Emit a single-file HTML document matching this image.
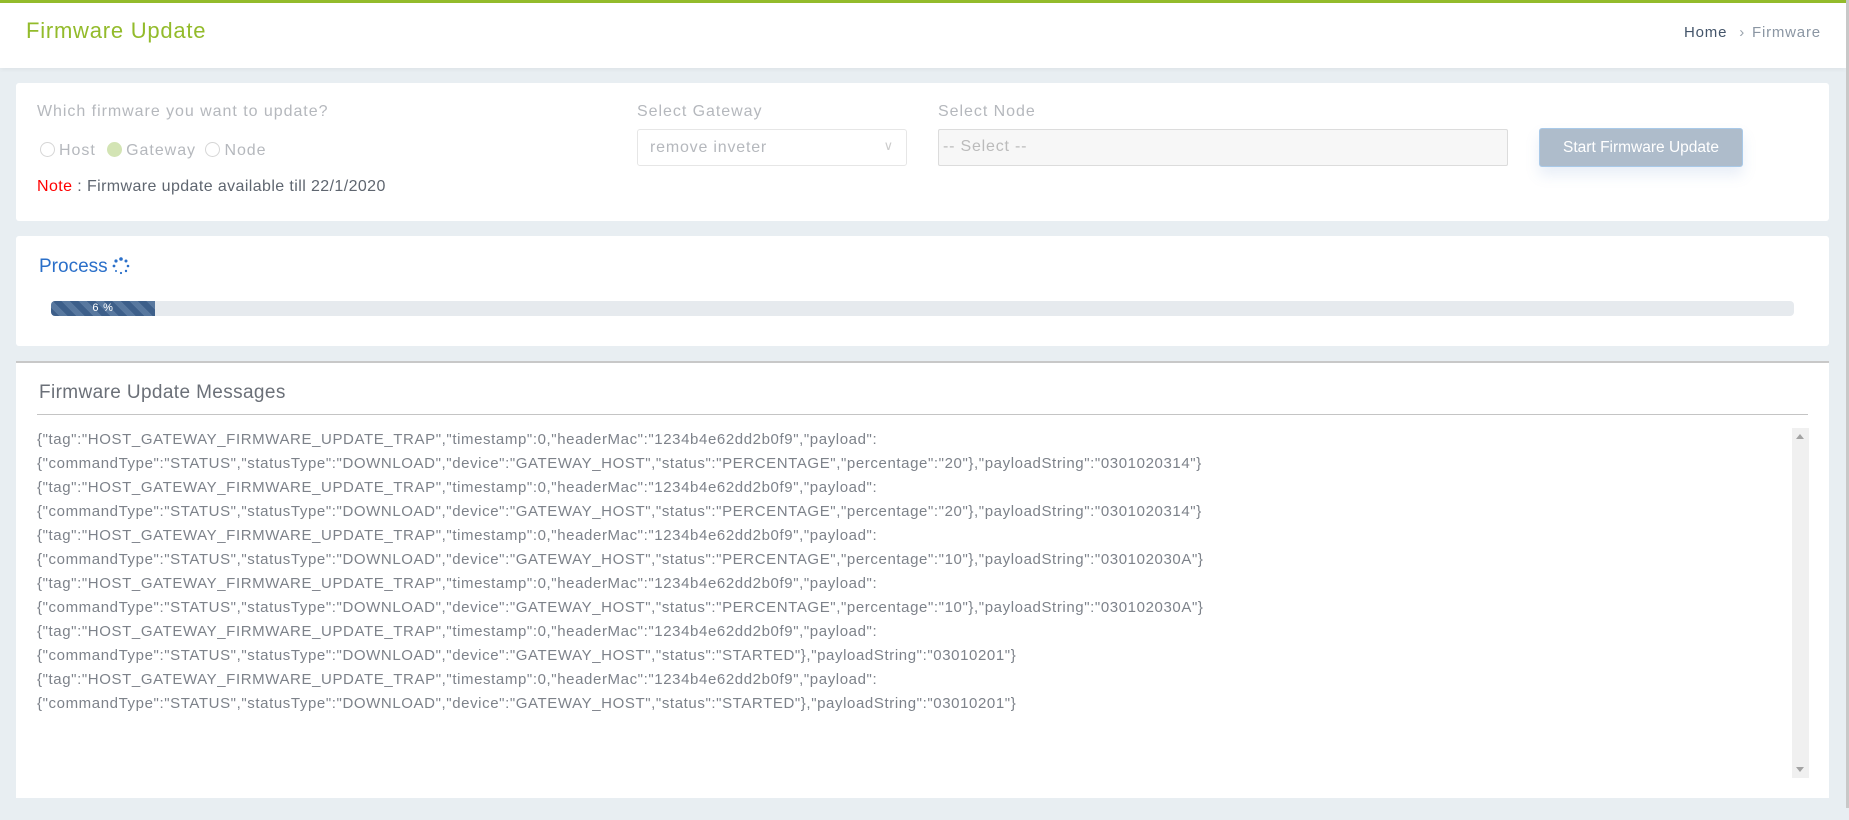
<!DOCTYPE html>
<html><head><meta charset="utf-8"><style>
*{box-sizing:border-box;margin:0;padding:0}
body{width:1849px;height:820px;background:#e8eef2;font-family:"Liberation Sans",sans-serif;position:relative;overflow:hidden;letter-spacing:0.05em}
.abs{position:absolute}
.top{left:0;top:0;width:1846px;height:68px;background:#fff;border-top:3px solid #93bb2b;box-shadow:0 2px 4px rgba(0,0,0,.04)}
.card{background:#fff;border-radius:3px;position:absolute}
.lbl{color:#b5b8bd;font-size:16px;letter-spacing:0.06em}
.radio{display:inline-block;width:15px;height:15px;border-radius:50%;border:1px solid #d6d6d6;vertical-align:-2px;margin-right:4px}
.msg{font-size:15px;color:#7d828a;line-height:24px;white-space:nowrap;letter-spacing:0.6px}
</style></head><body>
<div class="abs top"></div>
<div class="abs" style="left:26px;top:18px;font-size:22px;color:#93bb2b;letter-spacing:0.035em">Firmware Update</div>
<div class="abs" style="left:1684px;top:24px;font-size:15px;color:#44556a">Home <span style="color:#9aa3ad;margin:0 7px">&#8250;</span><span style="color:#8b96a3">Firmware</span></div>
<div class="abs" style="left:1846px;top:0;width:3px;height:808px;background:#c8c8c8"></div>

<div class="card" style="left:16px;top:83px;width:1813px;height:138px"></div>
<div class="abs lbl" style="left:37px;top:103px">Which firmware you want to update?</div>
<div class="abs lbl" style="left:40px;top:142px;font-size:16px"><span class="radio"></span>Host <span class="radio" style="background:#d3e4b4;border-color:#d3e4b4;margin-left:6px"></span>Gateway <span class="radio" style="margin-left:4px"></span>Node</div>
<div class="abs" style="left:37px;top:178px;font-size:16px;color:#5f6670;letter-spacing:0.025em"><span style="color:#f00">Note</span> : Firmware update available till 22/1/2020</div>
<div class="abs lbl" style="left:637px;top:103px">Select Gateway</div>
<div class="abs" style="left:637px;top:129px;width:270px;height:37px;border:1px solid #e6e6e6;border-radius:3px;font-size:16px;color:#b5b8bd;padding:9px 12px">remove inveter<span style="position:absolute;right:12px;top:8px;color:#ccc;font-size:13px">&#8744;</span></div>
<div class="abs lbl" style="left:938px;top:103px">Select Node</div>
<div class="abs" style="left:938px;top:129px;width:570px;height:37px;border:1px solid #dcdcdc;border-radius:2px;background:#f7f7f7;font-size:16px;color:#bbb;padding:8px 4px">-- Select --</div>
<div class="abs" style="left:1539px;top:128px;width:204px;height:39px;background:#aebccb;border:1px solid #a9c9e8;border-radius:3px;color:#fff;font-size:15.5px;text-align:center;line-height:37px;letter-spacing:0;box-shadow:0 8px 14px rgba(100,140,200,.15)">Start Firmware Update</div>

<div class="card" style="left:16px;top:236px;width:1813px;height:110px"></div>
<div class="abs" style="left:39px;top:256px;font-size:19px;color:#2a6fc9;letter-spacing:0">Process</div>
<svg class="abs" style="left:112px;top:257px" width="18" height="18" viewBox="0 0 18 18"><g fill="#2a6fc9"><circle cx="9" cy="2" r="1.8"/><circle cx="14" cy="4" r="1.5"/><circle cx="16" cy="9" r="1.3"/><circle cx="14" cy="14" r="1.2"/><circle cx="9" cy="16" r="1.1"/><circle cx="4" cy="14" r="1"/><circle cx="2" cy="9" r="1.4"/><circle cx="4" cy="4" r="1.6"/></g></svg>
<div class="abs" style="left:51px;top:301px;width:1743px;height:15px;background:#e6eaee;border-radius:4px"></div>
<div class="abs" style="left:51px;top:301px;width:104px;height:15px;border-radius:4px 0 0 4px;background:repeating-linear-gradient(45deg,#3d5f8a 0 6px,#58789f 6px 12px);color:#fff;font-size:11px;text-align:center;line-height:15px">6 %</div>

<div class="card" style="left:16px;top:361px;width:1813px;height:437px;border-top:2px solid #c8c8c8;border-radius:0"></div>
<div class="abs" style="left:39px;top:382px;font-size:19px;color:#6b7078;letter-spacing:0.02em">Firmware Update Messages</div>
<div class="abs" style="left:37px;top:414px;width:1771px;height:1px;background:#c4c4c4"></div>
<div class="abs" style="left:1792px;top:428px;width:17px;height:350px;background:#f0f0f0"><div style="position:absolute;left:4px;top:6px;border:4px solid transparent;border-bottom:5px solid #a3a3a3;border-top:0"></div><div style="position:absolute;left:4px;bottom:6px;border:4px solid transparent;border-top:5px solid #a3a3a3;border-bottom:0"></div></div>
<div class="abs msg" style="left:37px;top:428px">
{"tag":"HOST_GATEWAY_FIRMWARE_UPDATE_TRAP","timestamp":0,"headerMac":"1234b4e62dd2b0f9","payload":<br>{"commandType":"STATUS","statusType":"DOWNLOAD","device":"GATEWAY_HOST","status":"PERCENTAGE","percentage":"20"},"payloadString":"0301020314"}<br>
{"tag":"HOST_GATEWAY_FIRMWARE_UPDATE_TRAP","timestamp":0,"headerMac":"1234b4e62dd2b0f9","payload":<br>{"commandType":"STATUS","statusType":"DOWNLOAD","device":"GATEWAY_HOST","status":"PERCENTAGE","percentage":"20"},"payloadString":"0301020314"}<br>
{"tag":"HOST_GATEWAY_FIRMWARE_UPDATE_TRAP","timestamp":0,"headerMac":"1234b4e62dd2b0f9","payload":<br>{"commandType":"STATUS","statusType":"DOWNLOAD","device":"GATEWAY_HOST","status":"PERCENTAGE","percentage":"10"},"payloadString":"030102030A"}<br>
{"tag":"HOST_GATEWAY_FIRMWARE_UPDATE_TRAP","timestamp":0,"headerMac":"1234b4e62dd2b0f9","payload":<br>{"commandType":"STATUS","statusType":"DOWNLOAD","device":"GATEWAY_HOST","status":"PERCENTAGE","percentage":"10"},"payloadString":"030102030A"}<br>
{"tag":"HOST_GATEWAY_FIRMWARE_UPDATE_TRAP","timestamp":0,"headerMac":"1234b4e62dd2b0f9","payload":<br>{"commandType":"STATUS","statusType":"DOWNLOAD","device":"GATEWAY_HOST","status":"STARTED"},"payloadString":"03010201"}<br>
{"tag":"HOST_GATEWAY_FIRMWARE_UPDATE_TRAP","timestamp":0,"headerMac":"1234b4e62dd2b0f9","payload":<br>{"commandType":"STATUS","statusType":"DOWNLOAD","device":"GATEWAY_HOST","status":"STARTED"},"payloadString":"03010201"}
</div>
</body></html>
